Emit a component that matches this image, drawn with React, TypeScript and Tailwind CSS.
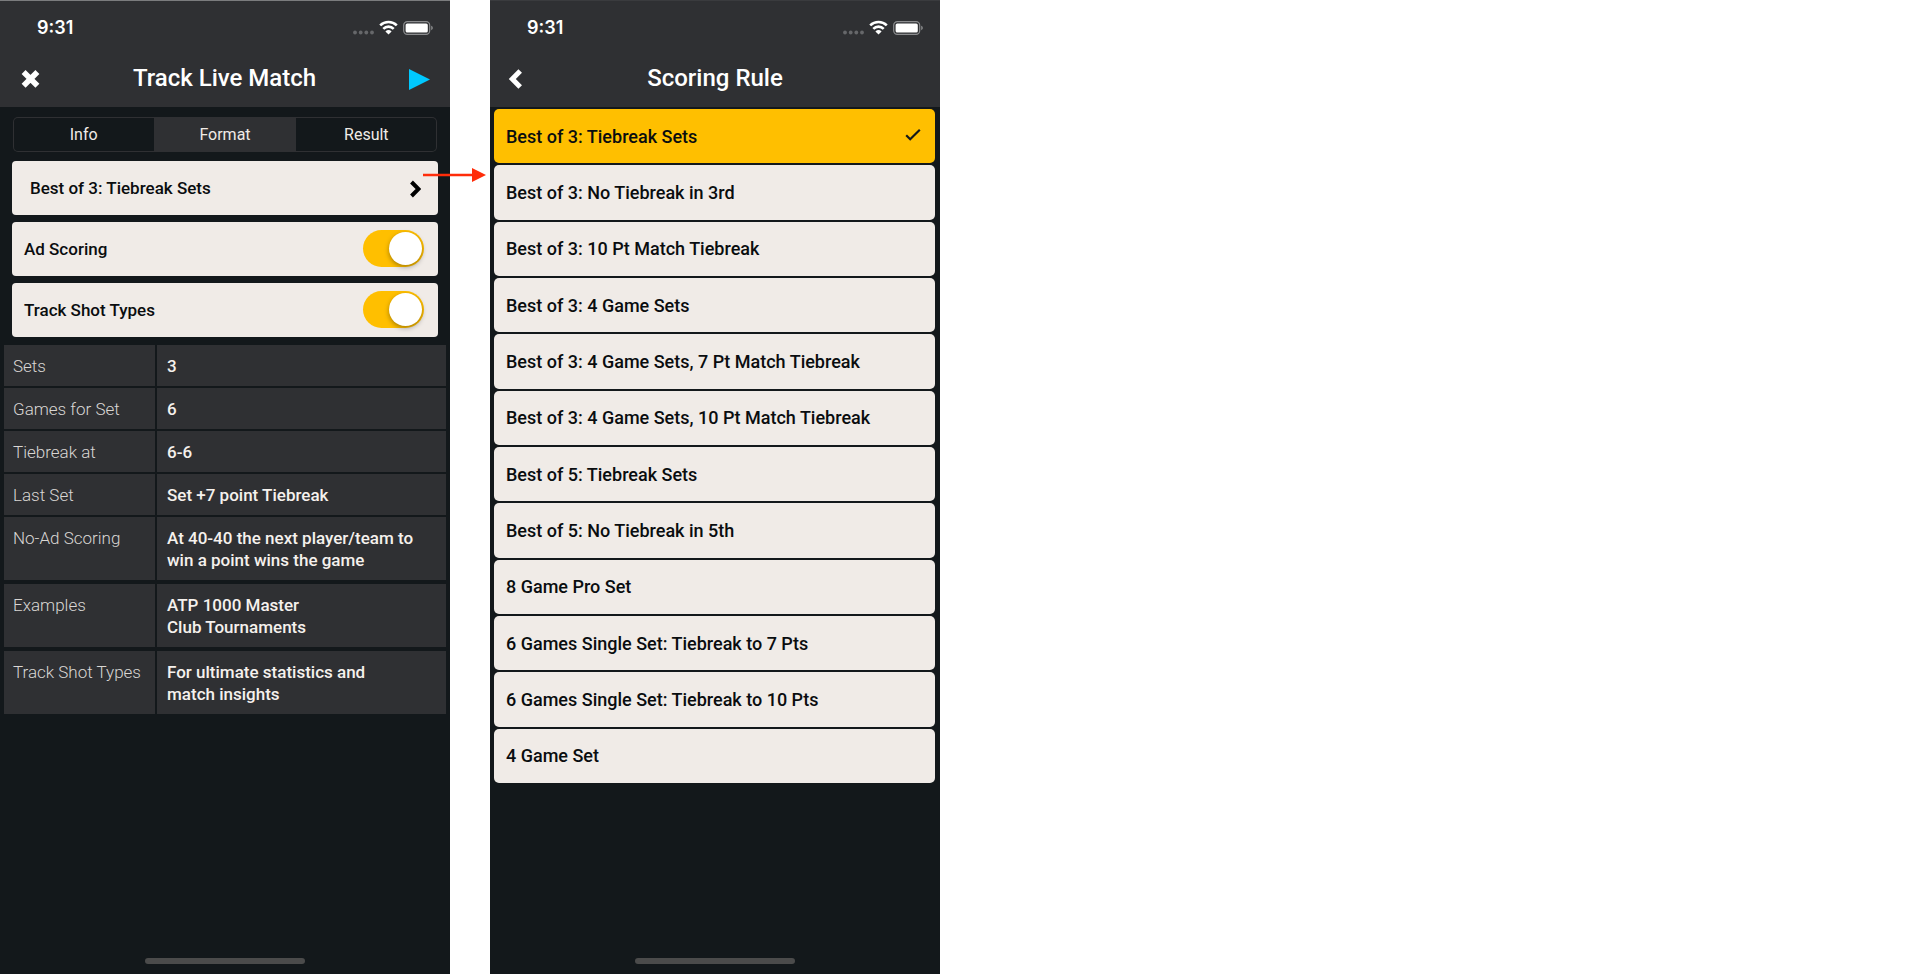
import React, { useState } from 'react';

const RULES = [
  'Best of 3: Tiebreak Sets',
  'Best of 3: No Tiebreak in 3rd',
  'Best of 3: 10 Pt Match Tiebreak',
  'Best of 3: 4 Game Sets',
  'Best of 3: 4 Game Sets, 7 Pt Match Tiebreak',
  'Best of 3: 4 Game Sets, 10 Pt Match Tiebreak',
  'Best of 5: Tiebreak Sets',
  'Best of 5: No Tiebreak in 5th',
  '8 Game Pro Set',
  '6 Games Single Set: Tiebreak to 7 Pts',
  '6 Games Single Set: Tiebreak to 10 Pts',
  '4 Game Set',
];

const DETAILS = [
  { label: 'Sets', lines: ['3'] },
  { label: 'Games for Set', lines: ['6'] },
  { label: 'Tiebreak at', lines: ['6-6'] },
  { label: 'Last Set', lines: ['Set +7 point Tiebreak'] },
  { label: 'No-Ad Scoring', lines: ['At 40-40 the next player/team to', 'win a point wins the game'] },
  { label: 'Examples', lines: ['ATP 1000 Master', 'Club Tournaments'], spaced: true },
  { label: 'Track Shot Types', lines: ['For ultimate statistics and', 'match insights'], spaced: true },
];

const TABS = ['Info', 'Format', 'Result'];

const StatusBar = () => (
  <div className="flex h-[54px] items-center justify-between pr-4 pl-[37px]">
    <span className="font-['Inter',sans-serif] text-lg font-semibold text-white">9:31</span>
    <svg width="82" height="16" viewBox="0 0 82 16" aria-hidden="true">
      <g fill="#66676a">
        <circle cx="3" cy="12.5" r="1.9" />
        <circle cx="8.7" cy="12.5" r="1.9" />
        <circle cx="14.3" cy="12.5" r="1.9" />
        <circle cx="20" cy="12.5" r="1.9" />
      </g>
      <g fill="none" stroke="#fff" strokeWidth="2.6">
        <path d="M28.2 5.4a12 12 0 0 1 16.6 0" />
        <path d="M31.3 8.8a7.4 7.4 0 0 1 10.4 0" />
      </g>
      <path d="M36.5 14.6l-3.1-3.2a4.6 4.6 0 0 1 6.2 0z" fill="#fff" />
      <rect x="51.7" y="1.6" width="26" height="12.8" rx="3.6" fill="none" stroke="#8b8c8e" strokeWidth="1.2" />
      <rect x="53.6" y="3.5" width="22.2" height="9" rx="1.6" fill="#fff" />
      <path d="M79.2 5.8v4.4c1-.3 1.6-1.2 1.6-2.2s-.6-1.9-1.6-2.2z" fill="#8b8c8e" />
    </svg>
  </div>
);

const Phone = ({ children }: { children: React.ReactNode }) => (
  <section className="flex min-h-screen w-full max-w-[450px] flex-col bg-[#13181b]">
    {children}
    <div className="mx-auto mt-auto mb-[10px] h-[6px] w-40 rounded-full bg-[#4b4b4b]" />
  </section>
);

const Toggle = ({ id, label }: { id: string; label: string }) => {
  const [on, setOn] = useState(true);

  return (
    <div className="flex h-[54px] items-center justify-between rounded bg-[#f0ebe7] pr-[14px] pl-3">
      <label htmlFor={id} className="pt-[2px]">{label}</label>
      <input
        id={id}
        type="checkbox"
        role="switch"
        checked={on}
        onChange={() => setOn(!on)}
        className="mb-[2px] flex h-[37px] w-[61px] appearance-none items-center rounded-full bg-gray-300 p-[2px] before:size-[33px] before:rounded-full before:bg-white before:shadow-[0_2px_5px_rgba(0,0,0,0.35)] checked:justify-end checked:bg-[#ffbf00]"
      />
    </div>
  );
};

const TrackMatch = () => {
  const [tab, setTab] = useState('Format');

  return (
    <Phone>
      <header className="border-t border-[#7b7c7e] bg-[#2f3033] pb-1">
        <StatusBar />
        <div className="flex h-12 items-center justify-between px-5">
          <button aria-label="Close">
            <svg width="20" height="22" viewBox="0 0 20 22" fill="none" stroke="#fff" strokeWidth="5.6">
              <path d="M3.6 4l13.8 13.8M17.4 4L3.6 17.8" />
            </svg>
          </button>
          <h1 className="pb-[2px] text-2xl font-medium text-white">Track Live Match</h1>
          <button aria-label="Start">
            <svg width="21" height="22" viewBox="0 0 21 22">
              <path d="M0 1v21l21-10.5z" fill="#00c8ff" />
            </svg>
          </button>
        </div>
      </header>

      <div className="mx-[13px] mt-[10px] flex h-[35px] overflow-hidden rounded-[5px] inset-ring inset-ring-[#2f3033]">
        {TABS.map((t) => (
          <button
            key={t}
            onClick={() => setTab(t)}
            className={`flex-1 text-base text-[#f0ebe7] ${t === tab ? 'bg-[#2f3033]' : ''}`}
          >
            {t}
          </button>
        ))}
      </div>

      <div className="mx-3 mt-[9px] flex flex-col gap-[7px] text-[17px] font-medium text-[#0a0d0f]">
        <button className="flex h-[54px] items-center justify-between rounded bg-[#f0ebe7] pt-[2px] pr-[17px] pl-[18px] text-left">
          Best of 3: Tiebreak Sets
          <svg width="11" height="18" viewBox="0 0 11 18" fill="none" stroke="#000" strokeWidth="4">
            <path d="M1.5 2l7 7-7 7" />
          </svg>
        </button>
        <Toggle id="ad-scoring" label="Ad Scoring" />
        <Toggle id="shot-types" label="Track Shot Types" />
      </div>

      <table className="mx-[2px] mt-[6px] border-separate border-spacing-[2px] text-[17px] leading-[22px]">
        <tbody>
          {DETAILS.map((row) => (
            <tr key={row.label} className={row.spaced ? 'align-top *:border-t-2 *:border-[#13181b]' : 'align-top'}>
              <th scope="row" className="w-[151px] bg-[#2f3033] pt-[10px] pr-2 pb-[9px] pl-[9px] text-left font-light text-[#d9d6d3]">
                {row.label}
              </th>
              <td className="bg-[#2f3033] pt-[10px] pr-2 pb-[9px] pl-[10px] font-medium text-[#f5f1ed]">
                {row.lines.map((line) => (
                  <div key={line}>{line}</div>
                ))}
              </td>
            </tr>
          ))}
        </tbody>
      </table>
    </Phone>
  );
};

const ScoringRule = () => {
  const [rule, setRule] = useState(RULES[0]);

  return (
    <Phone>
      <header className="border-t border-[#3a3b3e] bg-[#2f3033] pb-1">
        <StatusBar />
        <div className="grid h-12 grid-cols-[1fr_auto_1fr] items-center px-[18px]">
          <button aria-label="Back" className="justify-self-start">
            <svg width="14" height="20" viewBox="0 0 14 20" fill="none" stroke="#fff" strokeWidth="5">
              <path d="M12.2 2L4.3 10l7.9 8" />
            </svg>
          </button>
          <h1 className="pb-[2px] text-2xl font-medium text-white">Scoring Rule</h1>
        </div>
      </header>

      <div className="mt-[2px] mr-[5px] ml-1 flex min-h-[674px] flex-col gap-[2px] text-lg font-medium text-[#0a0d0f]">
        {RULES.map((r) => (
          <button
            key={r}
            onClick={() => setRule(r)}
            className={`flex flex-1 items-center justify-between rounded-[5px] pt-px pr-[14px] pl-3 text-left ${r === rule ? 'bg-[#ffbf00]' : 'bg-[#f0ebe7]'}`}
          >
            {r}
            {r === rule && (
              <svg width="16" height="16" viewBox="0 0 16 16" fill="none" stroke="#13181b" strokeWidth="2.2">
                <path d="M1.2 6.2l4 4L14.8 .8" />
              </svg>
            )}
          </button>
        ))}
      </div>
    </Phone>
  );
};

export default function App() {
  return (
    <main className="relative flex min-h-screen gap-10 bg-white font-['Roboto',sans-serif]">
      <TrackMatch />
      <ScoringRule />
      <svg className="absolute top-[168px] left-[423px]" width="63" height="14" viewBox="0 0 63 14" aria-hidden="true">
        <path d="M0 7h50" stroke="#ff2d0a" strokeWidth="2.4" />
        <path d="M49 0v14l14-7z" fill="#ff2d0a" />
      </svg>
    </main>
  );
}
